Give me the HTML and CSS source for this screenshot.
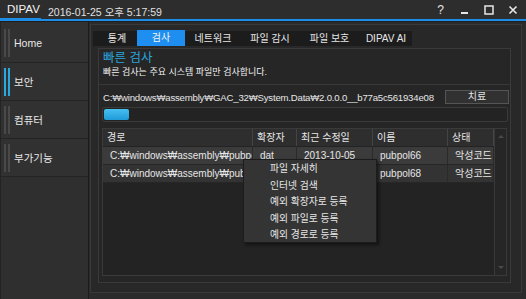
FILE: index.html
```html
<!DOCTYPE html>
<html lang="ko">
<head>
    <meta charset="UTF-8">
    <title>DIPAV</title>
    <link rel="stylesheet" href="styles.css">
</head>
<body>
    <div class="window">
        <!-- Title bar -->
        <div class="titlebar">
            <span class="brand">DIPAV</span>
            <span class="clock">2016-01-25 오후 5:17:59</span>
            <div class="controls">
                <span class="ctl help">?</span>
                <svg class="ctl" width="10" height="10" viewBox="0 0 10 10"><rect x="1" y="7" width="7" height="2" fill="#e6e6e6"/></svg>
                <svg class="ctl" width="10" height="10" viewBox="0 0 10 10"><rect x="1" y="1" width="8" height="8" fill="none" stroke="#e6e6e6" stroke-width="1.5"/></svg>
                <svg class="ctl" width="10" height="10" viewBox="0 0 10 10"><path d="M1.5 1.5 L8.5 8.5 M8.5 1.5 L1.5 8.5" stroke="#e6e6e6" stroke-width="1.6"/></svg>
            </div>
        </div>

        <div class="app">
            <!-- Side menu -->
            <div class="sidebar">
                <div class="side-item"><span class="bar"></span>Home</div>
                <div class="side-item active"><span class="bar"></span>보안</div>
                <div class="side-item"><span class="bar"></span>컴퓨터</div>
                <div class="side-item"><span class="bar"></span>부가기능</div>
            </div>

            <div class="main">
                <div class="frame">
                    <div class="tabs">
                        <span class="tab">통계</span>
                        <span class="tab active">검사</span>
                        <span class="tab">네트워크</span>
                        <span class="tab">파일 감시</span>
                        <span class="tab">파일 보호</span>
                        <span class="tab">DIPAV AI</span>
                    </div>

                    <div class="panel">
                        <div class="head">
                            <div class="head-title">빠른 검사</div>
                            <div class="head-sub">빠른 검사는 주요 시스템 파일만 검사합니다.</div>
                        </div>

                        <div class="path-row">
                            <span class="path">C:₩windows₩assembly₩GAC_32₩System.Data₩2.0.0.0__b77a5c561934e08</span>
                            <span class="btn">치료</span>
                        </div>

                        <div class="progress"><div class="progress-fill" style="width: 25px"></div></div>

                        <div class="list">
                            <div class="table">
                                <div class="row header">
                                    <span class="cell">경로</span>
                                    <span class="cell">확장자</span>
                                    <span class="cell">최근 수정일</span>
                                    <span class="cell">이름</span>
                                    <span class="cell">상태</span>
                                </div>
                                <div class="row sel">
                                    <span class="cell">C:₩windows₩assembly₩pubpol66</span>
                                    <span class="cell">dat</span>
                                    <span class="cell">2013-10-05</span>
                                    <span class="cell">pubpol66</span>
                                    <span class="cell">악성코드</span>
                                </div>
                                <div class="row">
                                    <span class="cell">C:₩windows₩assembly₩pubpol68</span>
                                    <span class="cell">dat</span>
                                    <span class="cell">2013-10-05</span>
                                    <span class="cell">pubpol68</span>
                                    <span class="cell">악성코드</span>
                                </div>
                            </div>
                            <div class="scrollbar">
                                <span class="arrow up"></span>
                                <span class="arrow down"></span>
                            </div>
                        </div>
                    </div>
                </div>
            </div>
        </div>

        <!-- Context menu -->
        <div class="menu">
            <div class="menu-item">파일 자세히</div>
            <div class="menu-item">인터넷 검색</div>
            <div class="menu-item">예외 확장자로 등록</div>
            <div class="menu-item">예외 파일로 등록</div>
            <div class="menu-item">예외 경로로 등록</div>
        </div>
    </div>
</body>
</html>
```

FILE: styles.css
```css
* {
    margin: 0;
    padding: 0;
    box-sizing: border-box;
}

body {
    font-family: 'Liberation Sans', 'Noto Sans CJK KR', sans-serif;
    font-size: 10px;
    color: #e6e6e6;
    background: #2b2b2b;
}

.window {
    width: 526px;
    height: 299px;
    position: relative;
    display: flex;
    flex-direction: column;
    overflow: hidden;
}

/* Title bar */
.titlebar {
    height: 21px;
    flex-shrink: 0;
    display: flex;
    align-items: stretch;
    background: #2d2d2d;
    border-bottom: 2px solid #1c8ee8;
}

.brand {
    font-size: 11.5px;
    color: #f2f2f2;
    padding: 3px 0 0 7px;
    width: 41px;
    box-shadow: inset 0 -1px 0 #1c8ee8;
}

.clock {
    padding: 4px 0 0 7px;
    font-size: 10.5px;
    color: #e0e0e0;
}

.controls {
    margin-left: auto;
    display: flex;
    align-items: center;
    gap: 14px;
    padding: 0 8px 0 0;
}

.help {
    font-size: 12px;
    margin-right: 2px;
}

/* App body */
.app {
    flex: 1;
    display: flex;
    background: #1f1f1f;
    padding-top: 1px;
}

.sidebar {
    width: 89px;
    flex-shrink: 0;
    background: #2f2f2f;
    border-right: 1px solid #1c1c1c;
    border-left: 1px solid #232323;
    padding-top: 1px;
}

.side-item {
    height: 38px;
    display: flex;
    align-items: center;
    background: #313131;
    border-bottom: 1px solid #242424;
    font-size: 10.5px;
    color: #e8e8e8;
    white-space: nowrap;
}

.side-item:first-child {
    height: 40px;
}

.bar {
    width: 6px;
    height: 28px;
    border-left: 2px solid #494949;
    border-right: 2px solid #494949;
    margin: 0 4px 0 3px;
}

.side-item.active .bar {
    border-color: #2aa8e0;
}

.main {
    flex: 1;
    min-width: 0;
    padding: 2px 4px 6px 1px;
    background: #2b2b2b;
}

.frame {
    height: 100%;
    background: #282828;
    border: 1px solid #393939;
    padding: 6px 10px 8px 2px;
}

/* Tabs */
.tabs {
    width: 319px;
    height: 15px;
    display: flex;
    align-items: center;
    background: #1c1c1c;
    padding-left: 4px;
    white-space: nowrap;
}

.tab {
    text-align: center;
    color: #e6e6e6;
    line-height: 15px;
}

.tab:nth-child(1) { width: 40px; }
.tab:nth-child(2) { width: 48px; }
.tab:nth-child(3) { width: 56px; }
.tab:nth-child(4) { width: 58px; }
.tab:nth-child(5) { width: 61px; }
.tab:nth-child(6) { width: 52px; }

.tab.active {
    background: #1e8ff0;
    color: #f4f4f4;
    height: 16px;
    margin-top: -2px;
    line-height: 16px;
}

/* Content panel */
.panel {
    margin: 2px 0 0 5px;
    height: 235px;
    border: 1px solid #3a3a3a;
    background: #262626;
    display: flex;
    flex-direction: column;
}

.head {
    height: 36px;
    padding: 2px 4px 0;
    border-bottom: 1px solid #383838;
}

.head-title {
    font-size: 12.5px;
    line-height: 15px;
    color: #2aa4dd;
}

.head-sub {
    font-size: 9px;
    line-height: 13px;
    color: #f0f0f0;
}

.path-row {
    display: flex;
    align-items: center;
    padding: 5px 1px 0 4px;
}

.path {
    flex: 1;
    font-size: 9.6px;
    letter-spacing: -0.2px;
    white-space: nowrap;
}

.btn {
    width: 64px;
    height: 14px;
    line-height: 12px;
    text-align: center;
    background: #313131;
    border: 1px solid #555;
}

.progress {
    margin: 3px 2px 0 3px;
    height: 15px;
    border: 1px solid #3a3a3a;
    border-radius: 2px;
    background: #232323;
    padding: 1px;
}

.progress-fill {
    height: 100%;
    border-radius: 2px;
    background: linear-gradient(#46bff0, #1e9ad8);
}

/* File list */
.list {
    margin: 6px 3px 6px 3px;
    flex: 1;
    border: 1px solid #3a3a3a;
    display: flex;
    background: #232323;
}

.table {
    flex: 1;
}

.row {
    display: grid;
    grid-template-columns: 150px 44px 76px 75px 46px;
    height: 18px;
    line-height: 17px;
    background: #333;
    border-bottom: 1px solid #262626;
}

.row.sel {
    background: #3b3b3b;
}

.row.header {
    background: #2e2e2e;
    border-bottom: 1px solid #232323;
}

.cell {
    white-space: nowrap;
    overflow: hidden;
    padding-left: 7px;
    border-right: 1px solid #2a2a2a;
}

.header .cell {
    padding-left: 4px;
    border-right: 1px solid #444;
}

.scrollbar {
    width: 12px;
    border-left: 1px solid #3a3a3a;
    background: #262626;
    display: flex;
    flex-direction: column;
    justify-content: space-between;
    align-items: center;
    padding: 6px 0 6px;
}

.arrow {
    width: 0;
    height: 0;
    border-left: 3px solid transparent;
    border-right: 3px solid transparent;
}

.arrow.up {
    border-bottom: 3px solid #4a4a4a;
}

.arrow.down {
    border-top: 3px solid #4a4a4a;
}

/* Context menu */
.menu {
    position: absolute;
    left: 243px;
    top: 159px;
    width: 134px;
    height: 84px;
    background: #343434;
    border: 1px solid #1c1c1c;
    box-shadow: 2px 2px 3px rgba(0, 0, 0, 0.5);
    padding: 1px 0 0 26px;
    font-size: 9.8px;
}

.menu-item {
    line-height: 16.5px;
    color: #e6e6e6;
}
```
